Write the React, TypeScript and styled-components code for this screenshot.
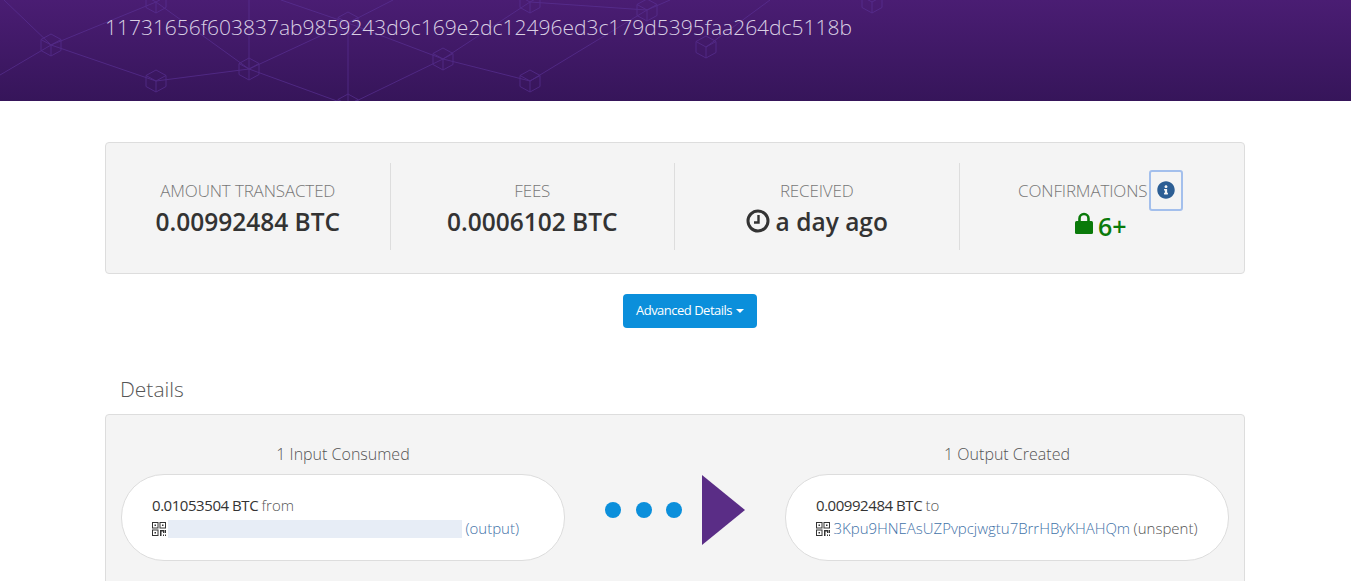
import React from "react";
import styled, { createGlobalStyle } from "styled-components";
import { FaInfoCircle } from "react-icons/fa";

const GlobalStyle = createGlobalStyle`
  html, body {
    margin: 0;
    height: 100%;
    overflow: hidden;
    background: #fff;
    font-family: "Open Sans", "Liberation Sans", sans-serif;
    color: #333;
  }
`;

// Node centres of the network drawn behind the hash
const cubes: [number, number][] = [
  [51, 45], [156, 81], [249, 69], [348, 105], [348, 23], [156, 2], [443, 59],
  [530, 81], [530, 2], [647, 10], [706, 47], [872, 2],
];

const links: [number, number, number, number][] = [
  [0, 75, 51, 45], [4, 0, 51, 45], [51, 45, 156, 2], [51, 45, 156, 81],
  [156, 81, 249, 69], [156, 2, 249, 69], [249, 0, 249, 69], [249, 69, 348, 105],
  [249, 69, 348, 23], [281, 0, 348, 23], [348, 23, 393, 0], [348, 23, 348, 105],
  [348, 105, 443, 59], [348, 23, 443, 59], [443, 59, 530, 2], [443, 59, 530, 81],
  [530, 81, 647, 10], [530, 2, 647, 10], [647, 10, 670, 0], [706, 47, 770, 0],
];

const Network = () => (
  <NetworkSvg viewBox="0 0 1351 101" width="1351" height="101" fill="none">
    {links.map(([x1, y1, x2, y2], i) => (
      <line key={i} x1={x1} y1={y1} x2={x2} y2={y2} />
    ))}
    {cubes.map(([x, y], i) => (
      <g key={i} transform={`translate(${x} ${y})`}>
        <path d="M0-11 10-5.500V5.500L0 11-10 5.500V-5.500Z" />
        <path d="M-10-5.500 0 0 10-5.500M0 0V11" />
      </g>
    ))}
  </NetworkSvg>
);

const ClockIcon = () => (
  <ClockSvg viewBox="0 0 24 24" fill="none" stroke="currentColor">
    <circle cx="12" cy="12" r="10" strokeWidth="3" />
    <path d="M12.500 6V13.500H8" strokeWidth="2.400" />
  </ClockSvg>
);

const LockIcon = () => (
  <LockSvg viewBox="0 0 18 22">
    <path
      d="M4.500 10V6.500a4.500 4.500 0 0 1 9 0V10"
      fill="none"
      stroke="currentColor"
      strokeWidth="2.600"
    />
    <rect x="0" y="9" width="18" height="13" rx="1.500" fill="currentColor" />
  </LockSvg>
);

const QrIcon = () => (
  <QrSvg viewBox="0 0 14 14" fill="none" stroke="currentColor">
    <rect x="0.500" y="0.500" width="5.500" height="5.500" />
    <rect x="8" y="0.500" width="5.500" height="5.500" />
    <rect x="0.500" y="8" width="5.500" height="5.500" />
    <path d="M2.500 2.500h1.500v1.500h-1.500zM10 2.500h1.500v1.500h-1.500zM2.500 10h1.500v1.500h-1.500z" fill="currentColor" stroke="none" />
    <path d="M8 8h4v3h-1v-1.500H9.500V14H8zM12.500 8H14v3h-1.500zM11 12.500h1V14h-1zM13 12.500h1V14h-1z" fill="currentColor" stroke="none" />
  </QrSvg>
);

const App: React.FC = () => {
  return (
    <>
      <GlobalStyle />
      <Header>
        <Network />
        <Hash>11731656f603837ab9859243d9c169e2dc12496ed3c179d5395faa264dc5118b</Hash>
      </Header>
      <Container>
        <Summary>
          <Stat>
            <StatLabel>Amount Transacted</StatLabel>
            <StatValue>0.00992484 BTC</StatValue>
          </Stat>
          <Stat>
            <StatLabel>Fees</StatLabel>
            <StatValue>0.0006102 BTC</StatValue>
          </Stat>
          <Stat>
            <StatLabel>Received</StatLabel>
            <StatValue>
              <ClockIcon /> a day ago
            </StatValue>
          </Stat>
          <Stat>
            <StatLabel>
              Confirmations
              <InfoButton aria-label="About confirmations">
                <FaInfoCircle />
              </InfoButton>
            </StatLabel>
            <Confirmations>
              <LockIcon /> 6+
            </Confirmations>
          </Stat>
        </Summary>

        <ButtonRow>
          <DetailsButton>
            Advanced Details <Caret />
          </DetailsButton>
        </ButtonRow>

        <SectionTitle>Details</SectionTitle>
        <FlowPanel>
          <FlowColumn>
            <FlowTitle>1 Input Consumed</FlowTitle>
            <Pill>
              <Amount>
                0.01053504 BTC <Muted>from</Muted>
              </Amount>
              <AddressLine>
                <QrIcon />
                <Redacted />
                <AddressLink>(output)</AddressLink>
              </AddressLine>
            </Pill>
          </FlowColumn>
          <Arrow>
            <Dot />
            <Dot />
            <Dot />
            <Triangle />
          </Arrow>
          <FlowColumn>
            <FlowTitle>1 Output Created</FlowTitle>
            <Pill>
              <Amount>
                0.00992484 BTC <Muted>to</Muted>
              </Amount>
              <AddressLine>
                <QrIcon />
                <AddressLink>3Kpu9HNEAsUZPvpcjwgtu7BrrHByKHAHQm</AddressLink>
                <Muted>(unspent)</Muted>
              </AddressLine>
            </Pill>
          </FlowColumn>
        </FlowPanel>
      </Container>
    </>
  );
};

const Header = styled.header`
  position: relative;
  height: 101px;
  box-sizing: border-box;
  padding: 12px 105px 0;
  overflow: hidden;
  background: linear-gradient(to bottom, #4a1d73 0%, #36155a 100%);
`;

const NetworkSvg = styled.svg`
  position: absolute;
  top: 0;
  left: 0;
  stroke: #5d349a;
  stroke-width: 1;
  opacity: 0.6;
`;

const Hash = styled.h1`
  position: relative;
  margin: 0;
  font-size: 21px;
  line-height: 30px;
  font-weight: 300;
  letter-spacing: -0.015px;
  color: #d9cfe3;
`;

const Container = styled.main`
  width: 1140px;
  margin: 41px 0 0 105px;
`;

const Summary = styled.section`
  display: grid;
  grid-template-columns: repeat(4, 1fr);
  padding: 20px 0 23px;
  background: #f4f4f4;
  border: 1px solid #ddd;
  border-radius: 4px;
`;

const Stat = styled.div`
  height: 87px;
  padding-top: 16px;
  box-sizing: border-box;
  text-align: center;
  border-right: 1px solid #ddd;

  &:last-child {
    border-right: none;
  }
`;

const StatLabel = styled.div`
  display: flex;
  justify-content: center;
  align-items: center;
  height: 22px;
  font-size: 17px;
  font-weight: 300;
  letter-spacing: -0.15px;
  text-transform: uppercase;
  color: #777;
`;

const StatValue = styled.div`
  display: flex;
  justify-content: center;
  align-items: center;
  gap: 6px;
  margin-top: 3px;
  height: 34px;
  font-size: 24.500px;
  font-weight: 600;
  color: #333;
`;

const Confirmations = styled(StatValue)`
  gap: 5px;
  margin-top: 8px;
  margin-left: -2px;
  font-size: 25px;
  color: #0a7a0a;
`;

const ClockSvg = styled.svg`
  width: 24px;
  height: 24px;
`;

const LockSvg = styled.svg`
  width: 18px;
  height: 22px;
  margin-top: -7px;
`;

const QrSvg = styled.svg`
  flex: none;
  width: 14px;
  height: 14px;
  color: #333;
`;

const InfoButton = styled.button`
  display: flex;
  align-items: center;
  justify-content: center;
  flex: none;
  width: 34px;
  height: 41px;
  margin: -9px 2px -9px 2px;
  padding: 0;
  background: transparent;
  border: 2px solid #a3bfec;
  border-radius: 3px;
  color: #2c5e94;
  font-size: 18px;
`;

const ButtonRow = styled.div`
  display: flex;
  justify-content: center;
  margin-top: 20px;
  padding-left: 30px;
`;

const DetailsButton = styled.button`
  display: flex;
  align-items: center;
  gap: 4px;
  height: 34px;
  padding: 0 13px 2px;
  background: #0b8fdb;
  border: none;
  border-radius: 4px;
  color: #fff;
  font-family: inherit;
  font-size: 13px;
  font-weight: 400;
  letter-spacing: -0.5px;
`;

const Caret = styled.span`
  width: 0;
  height: 0;
  margin-top: 2px;
  border-top: 4px solid #fff;
  border-left: 4px solid transparent;
  border-right: 4px solid transparent;
`;

const SectionTitle = styled.h2`
  margin: 47px 0 0 15px;
  font-size: 21px;
  line-height: 28px;
  font-weight: 300;
  color: #555;
`;

const FlowPanel = styled.section`
  display: grid;
  grid-template-columns: 444px 1fr 444px;
  margin-top: 11px;
  padding: 28px 15px 60px;
  background: #f4f4f4;
  border: 1px solid #ddd;
  border-radius: 4px;
`;

const FlowColumn = styled.div`
  display: flex;
  flex-direction: column;
`;

const FlowTitle = styled.div`
  height: 22px;
  margin-bottom: 9px;
  text-align: center;
  font-size: 16px;
  line-height: 22px;
  font-weight: 300;
  color: #555;
`;

const Pill = styled.div`
  height: 87px;
  box-sizing: border-box;
  padding: 19px 30px 0;
  background: #fff;
  border: 1px solid #ddd;
  border-radius: 43px;
  font-size: 15px;
  line-height: 23px;
  font-weight: 300;
  white-space: nowrap;
`;

const Amount = styled.div`
  font-weight: 400;
  letter-spacing: -0.45px;
  color: #333;
`;

const Muted = styled.span`
  font-weight: 300;
  letter-spacing: 0;
  color: #555;
`;

const AddressLine = styled.div`
  display: flex;
  align-items: center;
  gap: 3.500px;
`;

const AddressLink = styled.a`
  color: #3f72a8;
  letter-spacing: -0.02px;
`;

const Redacted = styled.span`
  display: block;
  width: 294px;
  height: 18px;
  margin-left: -1.500px;
  background: #e7edf6;
`;

const Arrow = styled.div`
  display: flex;
  align-items: center;
  padding: 16px 0 0 40px;
`;

const Dot = styled.span`
  flex: none;
  width: 16px;
  height: 16px;
  margin-right: 14.500px;
  border-radius: 50%;
  background: #0b8fdb;
`;

const Triangle = styled.span`
  flex: none;
  width: 0;
  height: 0;
  margin-left: 5px;
  border-left: 43px solid #5a2d86;
  border-top: 35px solid transparent;
  border-bottom: 35px solid transparent;
`;

export default App;
